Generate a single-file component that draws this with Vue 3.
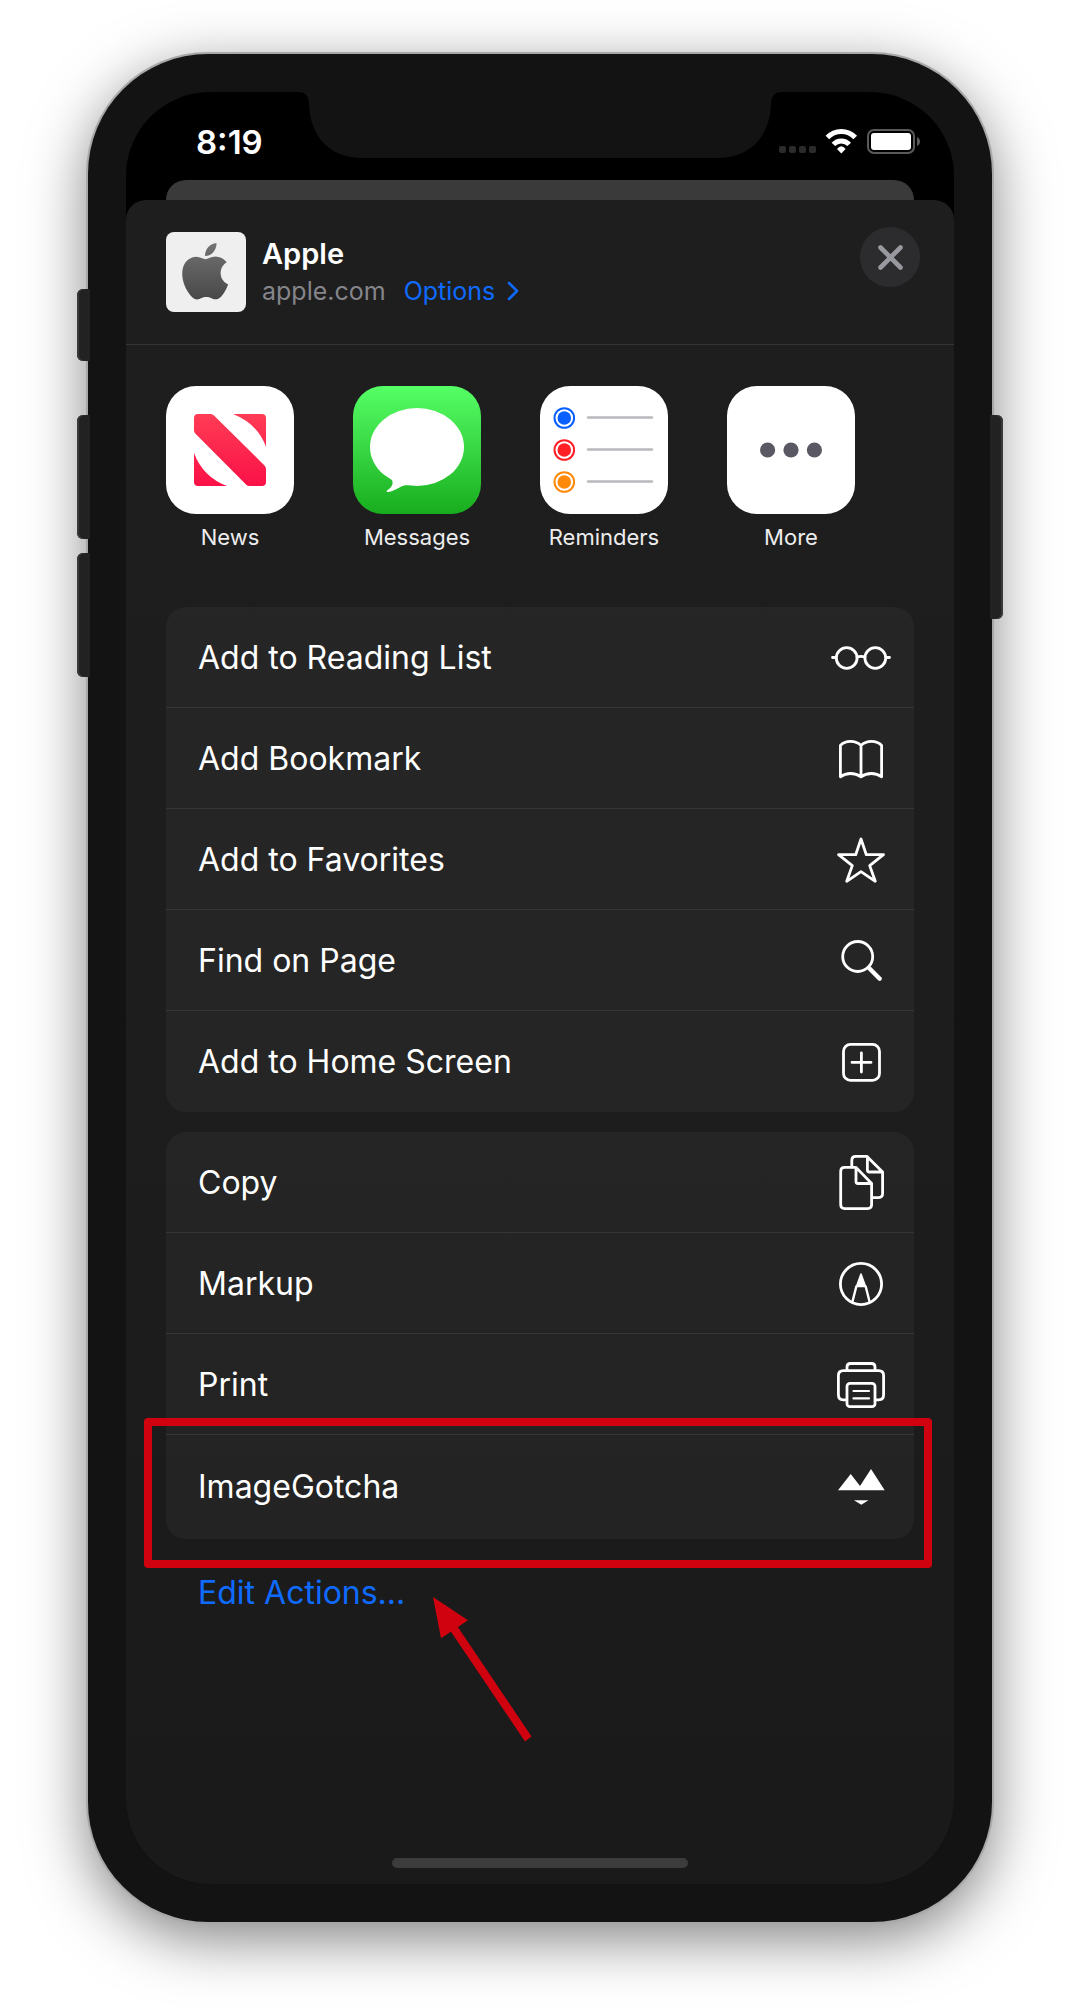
<script setup>
const apps = ['News', 'Messages', 'Reminders', 'More']

const pageActions = [
  { id: 'reading', label: 'Add to Reading List' },
  { id: 'bookmark', label: 'Add Bookmark' },
  { id: 'favorites', label: 'Add to Favorites' },
  { id: 'find', label: 'Find on Page' },
  { id: 'home', label: 'Add to Home Screen' },
]

const fileActions = [
  { id: 'copy', label: 'Copy' },
  { id: 'markup', label: 'Markup' },
  { id: 'print', label: 'Print' },
  { id: 'gotcha', label: 'ImageGotcha', highlighted: true },
]

const groups = [pageActions, fileActions]

const reminderDots = [
  { y: 32, color: '#0a60ff' },
  { y: 64, color: '#ff2026' },
  { y: 96, color: '#ff8a0a' },
]
</script>

<template>
  <main class="page">
    <div class="phone">
      <span class="key key-mute"></span>
      <span class="key key-up"></span>
      <span class="key key-down"></span>
      <span class="key key-power"></span>

      <div class="screen">
        <svg class="notch" width="486" height="66" viewBox="0 0 486 66" aria-hidden="true">
          <path fill="#131313" d="M0 0C9 0 12 4 12 13C13 38 27 66 66 66H420C459 66 473 38 474 13C474 4 477 0 486 0Z" />
        </svg>

        <div class="status">
          <span class="time">8:19</span>
          <svg width="141" height="26" viewBox="0 0 141 26" aria-hidden="true">
            <g fill="#2b2b2b">
              <rect x="0" y="18" width="7" height="7" rx="2" />
              <rect x="10" y="18" width="7" height="7" rx="2" />
              <rect x="20" y="18" width="7" height="7" rx="2" />
              <rect x="30" y="18" width="7" height="7" rx="2" />
            </g>
            <g fill="none" stroke="#fff" stroke-width="5">
              <path d="M48.4 9.5A19 19 0 0 1 76.2 9.5" />
              <path d="M54.4 16.4A10.8 10.8 0 0 1 70.2 16.4" />
            </g>
            <path fill="#fff" d="M62.3 25.4L58 21Q62.3 15.6 66.6 21Z" />
            <rect x="89" y="2" width="46" height="23" rx="6" fill="none" stroke="#5a5a5a" stroke-width="2" />
            <rect x="92" y="5" width="40" height="17" rx="3" fill="#fff" />
            <path fill="#5a5a5a" d="M138 9Q141 10.5 141 13.5Q141 16.5 138 18Z" />
          </svg>
        </div>

        <div class="backdrop-card"></div>

        <section class="sheet">
          <header class="head">
            <svg class="site" width="80" height="80" viewBox="0 0 80 80" aria-hidden="true">
              <defs>
                <linearGradient id="apple-fill" x1="0" y1="0" x2="0" y2="1">
                  <stop offset="0" stop-color="#737373" />
                  <stop offset="1" stop-color="#484848" />
                </linearGradient>
              </defs>
              <rect width="80" height="80" rx="8" fill="#efefef" />
              <path
                fill="url(#apple-fill)"
                transform="translate(11 11) scale(2.35)"
                d="M12.152 6.896c-.948 0-2.415-1.078-3.96-1.04-2.04.027-3.91 1.183-4.961 3.014-2.117 3.675-.546 9.103 1.519 12.09 1.013 1.454 2.208 3.09 3.792 3.039 1.52-.065 2.09-.987 3.935-.987 1.831 0 2.35.987 3.96.948 1.637-.026 2.676-1.48 3.676-2.948 1.156-1.688 1.636-3.325 1.662-3.415-.039-.013-3.182-1.221-3.22-4.857-.026-3.04 2.48-4.494 2.597-4.559-1.429-2.09-3.623-2.324-4.39-2.376-2-.156-3.675 1.09-4.61 1.09zM15.53 3.83c.843-1.012 1.4-2.427 1.245-3.83-1.207.052-2.662.805-3.532 1.818-.78.896-1.454 2.338-1.273 3.714 1.338.104 2.715-.688 3.559-1.701"
              />
            </svg>
            <div class="about">
              <h1>Apple</h1>
              <p>
                <span>apple.com</span>
                <a href="#options">Options
                  <svg width="12" height="20" viewBox="0 0 12 20" aria-hidden="true">
                    <path d="M2 2L10 10L2 18" fill="none" stroke="currentColor" stroke-width="2.5" stroke-linecap="round" stroke-linejoin="round" />
                  </svg>
                </a>
              </p>
            </div>
            <button class="close" type="button" aria-label="Close">
              <svg width="60" height="60" viewBox="0 0 60 60" aria-hidden="true">
                <path d="M20.5 20.5L40.5 40.5M40.5 20.5L20.5 40.5" stroke="#98989f" stroke-width="4.6" stroke-linecap="round" />
              </svg>
            </button>
          </header>

          <ul class="apps">
            <li v-for="app in apps" :key="app">
              <button class="app" type="button">
                <svg class="app-icon" width="128" height="128" viewBox="0 0 128 128" aria-hidden="true">
                  <template v-if="app === 'News'">
                    <defs>
                      <linearGradient id="news-fill" gradientUnits="userSpaceOnUse" x1="0" y1="28" x2="0" y2="100">
                        <stop offset="0" stop-color="#ff3c55" />
                        <stop offset="1" stop-color="#fa1147" />
                      </linearGradient>
                    </defs>
                    <rect width="128" height="128" fill="#fff" />
                    <g fill="url(#news-fill)">
                      <path d="M32 28H44.5Q46.5 28 48 29.5L98.5 79.5Q100 81 100 83V96Q100 100 96 100H83.500Q81.500 100 80 98.5L29.500 47.8Q28 46.3 28 44.5V32Q28 28 32 28Z" />
                      <path d="M67 28H96Q100 28 100 32V61Q92 38 67 28Z" />
                      <path d="M28 67Q37 91 61 100H32Q28 100 28 96Z" />
                    </g>
                  </template>
                  <template v-else-if="app === 'Messages'">
                    <defs>
                      <linearGradient id="messages-fill" x1="0" y1="0" x2="0" y2="1">
                        <stop offset="0" stop-color="#56ff66" />
                        <stop offset="1" stop-color="#18ad1e" />
                      </linearGradient>
                    </defs>
                    <rect width="128" height="128" fill="url(#messages-fill)" />
                    <ellipse cx="64" cy="61" rx="47" ry="39" fill="#fff" />
                    <path fill="#fff" d="M36 91C42 95 40 101 34 104.5Q33 106 35 106C43 105 47 100 52 99.3L60 99V88Z" />
                  </template>
                  <template v-else-if="app === 'Reminders'">
                    <rect width="128" height="128" fill="#fff" />
                    <g v-for="dot in reminderDots" :key="dot.y">
                      <circle cx="24.3" :cy="dot.y" r="9.8" fill="none" :stroke="dot.color" stroke-width="2" />
                      <circle cx="24.3" :cy="dot.y" r="6.8" :fill="dot.color" />
                      <path :d="`M48 ${dot.y - 0.5}H112`" stroke="#b9b9be" stroke-width="2.4" stroke-linecap="round" />
                    </g>
                  </template>
                  <template v-else>
                    <rect width="128" height="128" fill="#fff" />
                    <g fill="#5a5963">
                      <circle cx="40.6" cy="64" r="7.6" />
                      <circle cx="64" cy="64" r="7.6" />
                      <circle cx="87.4" cy="64" r="7.6" />
                    </g>
                  </template>
                </svg>
                <span>{{ app }}</span>
              </button>
            </li>
          </ul>

          <ul v-for="(group, index) in groups" :key="index" class="group">
            <li v-for="action in group" :key="action.id" :class="{ highlighted: action.highlighted }">
              <button class="row" type="button">
                <span>{{ action.label }}</span>
                <svg class="glyph" width="60" height="60" viewBox="0 0 60 60" aria-hidden="true">
                  <template v-if="action.id === 'reading'">
                    <circle cx="15.7" cy="31" r="10.4" />
                    <circle cx="44.3" cy="31" r="10.4" />
                    <path d="M1.5 30.5H5M55 30.5H58.5M26 30Q30 28.6 34 30" />
                  </template>
                  <template v-else-if="action.id === 'bookmark'">
                    <path d="M30 17.5Q26 13.4 19.5 13.4Q13 13.4 9.4 17.5V48.8Q14 45.5 19.5 45.5Q25.5 45.5 30 48.8Q34.5 45.5 40.5 45.5Q46 45.5 50.6 48.8V17.5Q47 13.4 40.5 13.4Q34 13.4 30 17.5ZM30 17.5V48.8" />
                  </template>
                  <template v-else-if="action.id === 'favorites'">
                    <path d="M30 10L35.3 25.7H52.5L38.7 36.6L44.3 52.3L30 42.6L15.7 52.3L21.3 36.6L7.5 25.7H24.7Z" />
                  </template>
                  <template v-else-if="action.id === 'find'">
                    <circle cx="26.7" cy="26.5" r="15" />
                    <path d="M38.5 38.5L48.7 48.7" stroke-width="4.4" />
                  </template>
                  <template v-else-if="action.id === 'home'">
                    <rect x="12.5" y="13.4" width="36" height="36" rx="7" />
                    <path d="M30.4 22V41M21 31.4H40" />
                  </template>
                  <template v-else-if="action.id === 'copy'">
                    <path d="M23.5 15.4H13.7Q9.7 15.4 9.7 19.4V52.6Q9.7 56.6 13.7 56.6H36.6Q40.6 56.6 40.6 52.6V31.5L25 15.4V29.5Q25 31.5 27 31.5H40.6" />
                    <path d="M20.8 15V8.4Q20.8 4.4 24.8 4.4H36L51.6 20V41.6Q51.6 45.6 47.6 45.6H42M36.4 4.6V18Q36.4 20 38.4 20H51.6" />
                  </template>
                  <template v-else-if="action.id === 'markup'">
                    <circle cx="30" cy="31" r="20.6" />
                    <path d="M30 21L25.5 33.5H34.5Z" fill="#fff" stroke-width="1.6" />
                    <path d="M25.3 33.5L21.5 48.5M34.7 33.5L38.5 48.5" stroke-width="2.4" />
                  </template>
                  <template v-else-if="action.id === 'print'">
                    <path d="M16 16V13Q16 9.5 19.5 9.5H40.5Q44 9.5 44 13V16" />
                    <path d="M15 45.8H12.4Q7.4 45.8 7.4 40.8V21.7Q7.4 16.7 12.4 16.7H47.6Q52.6 16.7 52.6 21.7V40.8Q52.6 45.8 47.6 45.8H45" />
                    <rect x="16" y="29.3" width="28" height="23.4" rx="3" />
                    <path d="M22.5 37H38M22.5 44.4H38" stroke-width="2.2" />
                  </template>
                  <g v-else fill="#fff" stroke="none">
                    <path d="M7 33.3L19.7 17L29 29L40 12L53.7 33.3Z" />
                    <path d="M23 43.3H37.5L30.3 47.8Z" />
                  </g>
                </svg>
              </button>
            </li>
          </ul>

          <div class="edit">
            <a href="#edit">Edit Actions...</a>
            <svg class="arrow" width="100" height="150" viewBox="0 0 100 150" aria-hidden="true">
              <g fill="#d0020f">
                <path d="M0 0L35 23.3L8 41.3Z" />
                <path d="M17.5 34L24.5 29.5L98.5 139.5L92 144.5Z" />
              </g>
            </svg>
          </div>

          <div class="home-bar"></div>
        </section>
      </div>
    </div>
  </main>
</template>

<style>
body {
  margin: 0;
  background: #fff;
}
</style>

<style scoped>
* {
  box-sizing: border-box;
}

.page {
  padding: 54px 88px 86px;
  font-family: Inter, "Liberation Sans", sans-serif;
  color: #fff;
  overflow: hidden;
}

h1,
p,
ul {
  margin: 0;
  padding: 0;
}

ul {
  list-style: none;
}

button {
  margin: 0;
  padding: 0;
  border: 0;
  background: none;
  color: inherit;
  font: inherit;
}

a {
  color: #0f6bff;
  text-decoration: none;
}

.phone {
  position: relative;
  padding: 38px;
  border-radius: 120px;
  background: #131313;
  box-shadow: 0 0 0 2px #a8a8a8, 0 16px 60px rgba(0, 0, 0, 0.5);
}

.key {
  position: absolute;
  left: -11px;
  width: 13px;
  border-radius: 6px 0 0 6px;
  background: #222;
  box-shadow: inset 2px 0 1px #3a3a3a;
}

.key-mute {
  top: 235px;
  height: 72px;
}

.key-up {
  top: 361px;
  height: 124px;
}

.key-down {
  top: 499px;
  height: 124px;
}

.key-power {
  top: 361px;
  right: -11px;
  left: auto;
  height: 204px;
  border-radius: 0 6px 6px 0;
  box-shadow: inset -2px 0 1px #3a3a3a;
}

.screen {
  position: relative;
  overflow: hidden;
  border-radius: 84px;
  background: #000;
}

.notch {
  position: absolute;
  top: 0;
  left: calc(50% - 243px);
}

.status {
  display: flex;
  justify-content: space-between;
  align-items: flex-end;
  height: 62px;
  padding: 0 34px 0 70px;
}

.time {
  font-size: 33px;
  font-weight: 600;
  line-height: 40px;
  height: 32px;
}

.backdrop-card {
  height: 40px;
  margin: 26px 40px -20px;
  border-radius: 20px 20px 0 0;
  background: #3a3a3a;
}

.sheet {
  position: relative;
  padding-bottom: 16px;
  border-radius: 20px 20px 0 0;
  background: linear-gradient(#1e1e1e, #1d1d1d 50%, #1a1a1a);
}

.head {
  display: flex;
  align-items: center;
  height: 145px;
  padding: 0 34px 0 40px;
  border-bottom: 1px solid #343434;
}

.about {
  flex: 1;
  margin-left: 16px;
}

h1 {
  font-size: 29px;
  font-weight: 600;
  line-height: 38px;
}

.about p {
  display: flex;
  gap: 18px;
  font-size: 25px;
  line-height: 36px;
  color: #85858b;
}

.about a {
  display: flex;
  align-items: center;
  gap: 12px;
}

.close {
  align-self: flex-start;
  width: 60px;
  height: 60px;
  margin-top: 27px;
  border-radius: 50%;
  background: #2c2c2e;
}

.close svg {
  display: block;
}

.apps {
  display: flex;
  gap: 59px;
  padding: 41px 40px 57px;
}

.app {
  display: flex;
  flex-direction: column;
  align-items: center;
  gap: 10px;
  width: 128px;
  font-size: 22px;
  line-height: 26px;
  color: #ededed;
}

.app-icon {
  border-radius: 30px;
}

.group {
  margin: 0 40px 20px;
  border-radius: 20px;
  background: rgba(255, 255, 255, 0.04);
}

.row {
  display: flex;
  justify-content: space-between;
  align-items: center;
  width: 100%;
  height: 101px;
  padding: 0 23px 0 32px;
  border-bottom: 1px solid #363636;
  font-size: 32px;
  text-align: left;
}

li:last-child .row {
  border-bottom-color: transparent;
}

.glyph {
  fill: none;
  stroke: #fff;
  stroke-width: 2.8;
  stroke-linecap: round;
  stroke-linejoin: round;
}

.highlighted {
  position: relative;
}

.highlighted .row {
  height: 104px;
}

.highlighted::after {
  content: "";
  position: absolute;
  inset: -17px -18px -29px -22px;
  border: 8px solid #d0020f;
  border-radius: 4px;
  pointer-events: none;
}

.edit {
  position: relative;
  margin: 34px 40px 0;
  padding: 0 32px;
  font-size: 32px;
  line-height: 40px;
}

.arrow {
  position: absolute;
  top: 24px;
  left: 267px;
}

.home-bar {
  width: 296px;
  height: 10px;
  margin: 245px auto 0;
  border-radius: 5px;
  background: #3c3c3c;
}
</style>
